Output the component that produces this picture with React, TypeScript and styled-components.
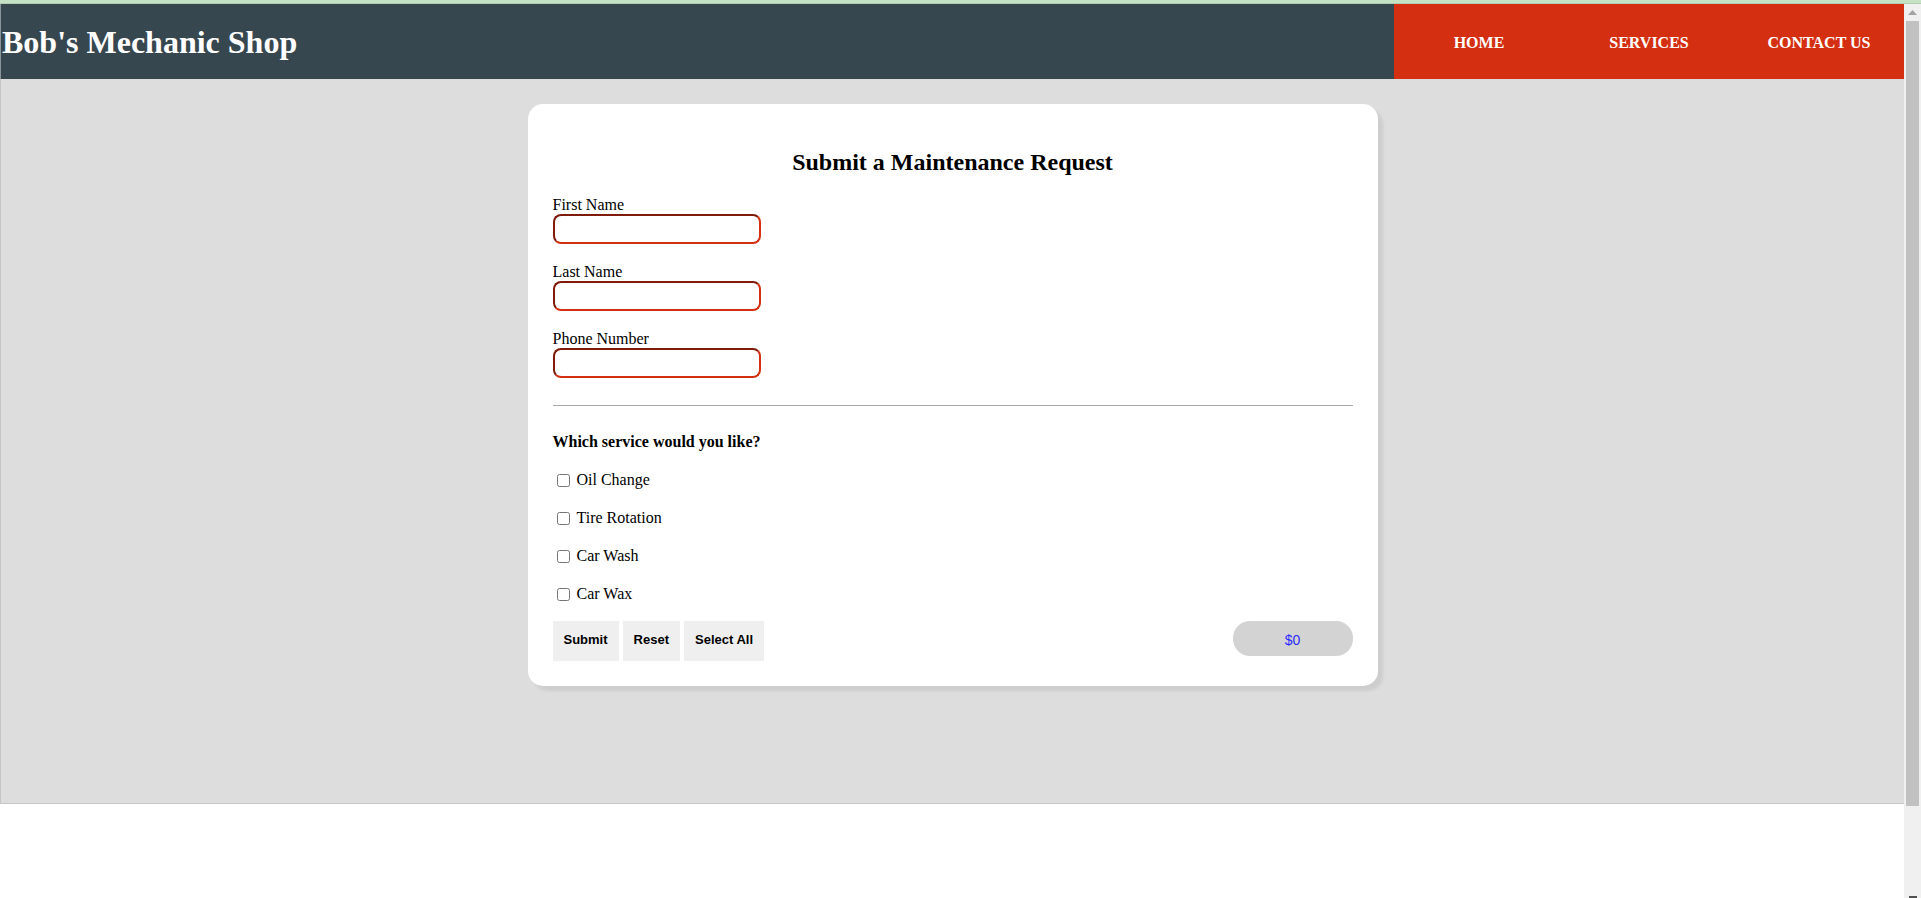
import React, { useState } from "react";
import styled, { createGlobalStyle } from "styled-components";

const GlobalStyle = createGlobalStyle`
  html, body { margin: 0; padding: 0; background: #ffffff; }
  body { font-family: "Liberation Serif", "Times New Roman", serif; overflow: hidden; }
  * { box-sizing: border-box; }
`;

const Frame = styled.div`
  display: flex;
  flex-direction: column;
  width: 1921px;
  height: 898px;
`;

const TopStrip = styled.div`
  height: 4px;
  background: #c6e2c4;
  border-bottom: 1px solid #b4cdb2;
  flex-shrink: 0;
`;

const Body = styled.div`
  display: flex;
  flex: 1;
  min-height: 0;
`;

const Page = styled.div`
  flex: 1;
  display: flex;
  flex-direction: column;
`;

const Header = styled.header`
  display: flex;
  align-items: stretch;
  height: 75px;
  background: #37474f;
  border-left: 1px solid #8a959a;
`;

const Brand = styled.h1`
  margin: 0;
  align-self: center;
  padding: 1px 0 0 1px;
  font-size: 32px;
  font-weight: bold;
  color: #ffffff;
  line-height: normal;
`;

const Nav = styled.nav`
  margin-left: auto;
  display: flex;
  width: 510px;
  background: #d32f10;
`;

const NavItem = styled.a`
  flex: 1;
  display: flex;
  align-items: center;
  justify-content: center;
  padding-top: 2px;
  color: #ffffff;
  font-weight: bold;
  font-size: 16px;
  text-decoration: none;
  cursor: pointer;
`;

const Main = styled.main`
  height: 725px;
  background: #dddddd;
  border-left: 1px solid #c6c6c6;
  border-bottom: 1px solid #c6c6c6;
  padding-top: 25px;
`;

const Card = styled.form`
  width: 850px;
  margin: 0 auto;
  background: #ffffff;
  border-radius: 15px;
  padding: 25px;
  box-shadow: 5px 5px 3px rgba(0, 0, 0, 0.07);
`;

const Title = styled.h2`
  margin: 19px 0 20px;
  font-size: 24px;
  line-height: 28px;
  text-align: center;
  font-weight: bold;
  color: #000;
`;

const Field = styled.div`
  display: flex;
  flex-direction: column;
  align-items: flex-start;
  margin-bottom: 19px;
`;

const FieldLabel = styled.label`
  font-size: 16px;
  line-height: 18px;
  color: #000;
`;

const TextInput = styled.input`
  width: 208px;
  height: 30px;
  border: 2px inset #d32f10;
  border-radius: 8px;
  background: #fff;
  font-family: "Liberation Sans", Arial, sans-serif;
  font-size: 13px;
  padding: 0 6px;
  outline: none;
`;

const Divider = styled.hr`
  margin: 27px 0 0;
  border: none;
  border-top: 1px solid #a8a8a8;
  height: 0;
`;

const Services = styled.div`
  display: flex;
  flex-direction: column;
  gap: 20px;
  margin-top: 27px;
`;

const Question = styled.div`
  font-size: 16px;
  line-height: 18px;
  font-weight: bold;
  color: #000;
`;

const CheckRow = styled.label`
  display: flex;
  align-items: center;
  height: 18px;
  font-size: 16px;
  line-height: 18px;
  color: #000;
`;

const Check = styled.input`
  width: 13px;
  height: 13px;
  margin: 0 7px 0 4px;
`;

const Actions = styled.div`
  display: flex;
  justify-content: space-between;
  align-items: flex-start;
  margin-top: 18px;
`;

const ButtonGroup = styled.div`
  display: flex;
  gap: 4px;
`;

const ActionButton = styled.button`
  height: 40px;
  padding: 0 11px 4px;
  border: none;
  background: #efefef;
  font-family: "Liberation Sans", Arial, sans-serif;
  font-weight: bold;
  font-size: 13px;
  color: #000;
  cursor: pointer;
`;

const Total = styled.div`
  width: 120px;
  height: 35px;
  border-radius: 17px;
  background: #d3d3d3;
  display: flex;
  align-items: center;
  justify-content: center;
  font-family: "Liberation Sans", Arial, sans-serif;
  font-size: 14px;
  color: #2b2bff;
  padding-top: 2px;
`;

const ScrollTrack = styled.div`
  width: 17px;
  background: #f0f0f0;
  display: flex;
  flex-direction: column;
  align-items: center;
  flex-shrink: 0;
`;

const ScrollArrow = styled.div`
  height: 17px;
  width: 17px;
  display: flex;
  align-items: center;
  justify-content: center;
`;

const ScrollThumb = styled.div`
  width: 13px;
  height: 785px;
  background: #c1c1c1;
`;

const ScrollEnd = styled.div`
  margin-top: auto;
  width: 8px;
  height: 2px;
  background: #505050;
`;

const services = [
  { name: "Oil Change", price: 35 },
  { name: "Tire Rotation", price: 30 },
  { name: "Car Wash", price: 10 },
  { name: "Car Wax", price: 25 },
];

export default function App() {
  const [checked, setChecked] = useState<boolean[]>([false, false, false, false]);
  const total = services.reduce((s, sv, i) => (checked[i] ? s + sv.price : s), 0);

  const toggle = (i: number) =>
    setChecked((c) => c.map((v, j) => (j === i ? !v : v)));

  return (
    <>
      <GlobalStyle />
      <Frame>
        <TopStrip />
        <Body>
          <Page>
            <Header>
              <Brand>Bob's Mechanic Shop</Brand>
              <Nav>
                <NavItem>HOME</NavItem>
                <NavItem>SERVICES</NavItem>
                <NavItem>CONTACT US</NavItem>
              </Nav>
            </Header>
            <Main>
              <Card onSubmit={(e) => e.preventDefault()}>
                <Title>Submit a Maintenance Request</Title>
                <Field>
                  <FieldLabel htmlFor="first">First Name</FieldLabel>
                  <TextInput id="first" type="text" />
                </Field>
                <Field>
                  <FieldLabel htmlFor="last">Last Name</FieldLabel>
                  <TextInput id="last" type="text" />
                </Field>
                <Field>
                  <FieldLabel htmlFor="phone">Phone Number</FieldLabel>
                  <TextInput id="phone" type="tel" />
                </Field>
                <Divider />
                <Services>
                  <Question>Which service would you like?</Question>
                  {services.map((s, i) => (
                    <CheckRow key={s.name}>
                      <Check type="checkbox" checked={checked[i]} onChange={() => toggle(i)} />
                      {s.name}
                    </CheckRow>
                  ))}
                </Services>
                <Actions>
                  <ButtonGroup>
                    <ActionButton type="submit">Submit</ActionButton>
                    <ActionButton type="button" onClick={() => setChecked([false, false, false, false])}>
                      Reset
                    </ActionButton>
                    <ActionButton type="button" onClick={() => setChecked([true, true, true, true])}>
                      Select All
                    </ActionButton>
                  </ButtonGroup>
                  <Total>${total}</Total>
                </Actions>
              </Card>
            </Main>
          </Page>
          <ScrollTrack>
            <ScrollArrow>
              <svg width="9" height="5" viewBox="0 0 9 5">
                <path d="M0 5 L4.5 0 L9 5 Z" fill="#a3a3a3" />
              </svg>
            </ScrollArrow>
            <ScrollThumb />
            <ScrollEnd />
          </ScrollTrack>
        </Body>
      </Frame>
    </>
  );
}
